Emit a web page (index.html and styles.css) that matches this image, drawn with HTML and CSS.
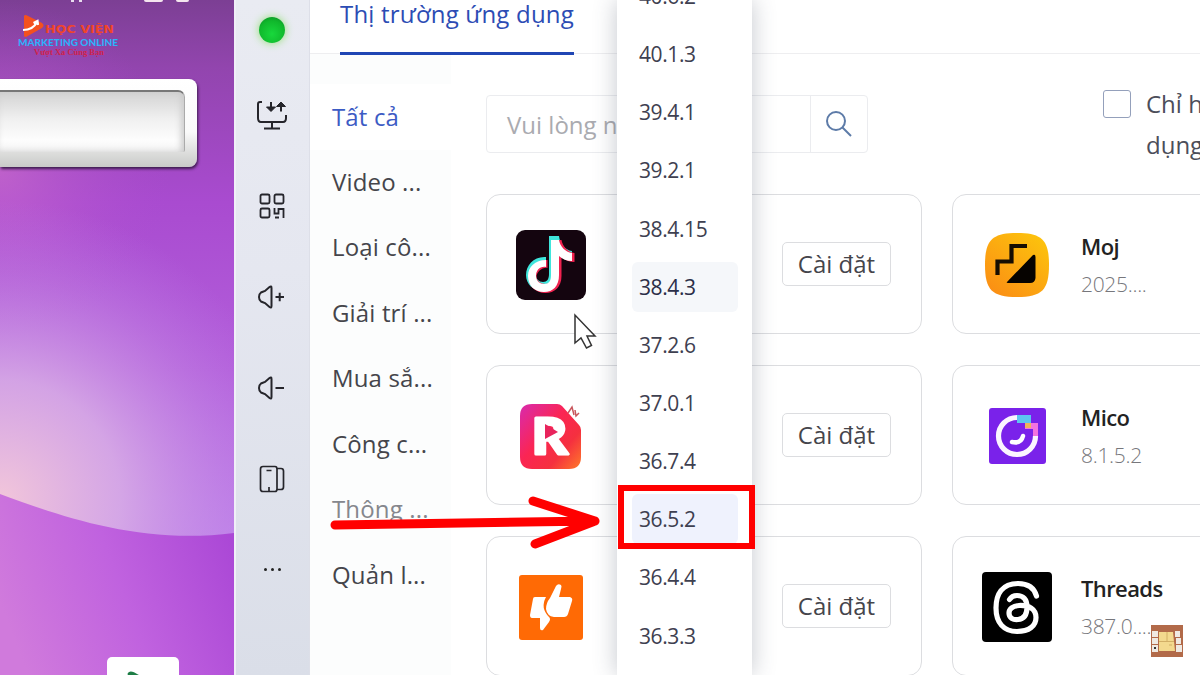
FILE: index.html
```html
<!DOCTYPE html>
<html lang="vi">
  <head>
    <meta charset="UTF-8">
    <title>Thị trường ứng dụng</title>
    <link rel="stylesheet" href="styles.css">
  </head>
  <body>
    <div class="phone">
      <svg class="wallpaper" viewBox="0 0 234 675" preserveAspectRatio="none">
        <defs>
          <linearGradient id="sky" x1="0" y1="0" x2="0" y2="1">
            <stop offset="0" stop-color="#7c3f94" />
            <stop offset="0.1" stop-color="#9245ae" />
            <stop offset="0.3" stop-color="#a94bd0" />
            <stop offset="0.55" stop-color="#b35fdb" />
            <stop offset="0.8" stop-color="#bd80ea" />
          </linearGradient>
          <radialGradient id="glow" gradientUnits="userSpaceOnUse" cx="0" cy="500" r="300">
            <stop offset="0" stop-color="#f2c6da" />
            <stop offset="0.4" stop-color="#d9aee6" stop-opacity="0.85" />
            <stop offset="0.75" stop-color="#c890e6" stop-opacity="0.35" />
            <stop offset="1" stop-color="#c080e8" stop-opacity="0" />
          </radialGradient>
          <linearGradient id="hill" x1="0" y1="0.6" x2="1" y2="0.3">
            <stop offset="0" stop-color="#d07adc" />
            <stop offset="0.5" stop-color="#c062df" />
            <stop offset="1" stop-color="#ab48d6" />
          </linearGradient>
          <radialGradient id="haze" gradientUnits="userSpaceOnUse" cx="0" cy="170" r="170">
            <stop offset="0" stop-color="#d070cc" stop-opacity="0.6" />
            <stop offset="1" stop-color="#b050d0" stop-opacity="0" />
          </radialGradient>
        </defs>
        <rect width="234" height="675" fill="url(#sky)" />
        <rect width="234" height="675" fill="url(#haze)" />
        <rect width="234" height="675" fill="url(#glow)" />
        <path d="M0 494C60 516 140 545 234 533V675H0Z" fill="url(#hill)" />
      </svg>
      <div class="status"><i></i><i></i><b></b><b></b></div>
      <svg class="brand" viewBox="0 0 106 44">
        <path d="M8 1Q8 0 10 0L26 8Q29 10.500 26 13L10 22Q8 22 8 21Z" fill="#f4511e" />
        <path d="M7 15Q17 15 21 7M17.500 8L21.500 6L22 10" fill="none" stroke="#fff" stroke-width="2.200" />
        <text x="29" y="17.500" class="brand-a" textLength="69" lengthAdjust="spacingAndGlyphs">HỌC VIỆN</text>
        <text x="2" y="31" class="brand-b" textLength="100" lengthAdjust="spacingAndGlyphs">MARKETING ONLINE</text>
        <text x="18" y="40" class="brand-c" textLength="70" lengthAdjust="spacingAndGlyphs">Vượt Xa Cùng Bạn</text>
      </svg>
      <div class="plate"><div class="plate-in"></div></div>
      <div class="app-tile">
        <svg viewBox="0 0 72 20"><path d="M19 18q2-3 7-1l9 5H19z" fill="#1e7d46" /></svg>
      </div>
    </div>

    <div class="toolbar">
      <span class="lamp"></span>
      <svg viewBox="0 0 32 32"><path d="M6 3H4Q2 3 2 5V19Q2 23 5 23H27Q30 23 30 19V16M16 23V29M8 29.500H24" /><path d="M15 3V11.500M25 12.500V4" /><path d="M10.500 8L15 12.500L19.500 8ZM20.500 7.500L25 3L29.500 7.500Z" fill="#25252b" stroke-width="1" /></svg>
      <svg viewBox="0 0 32 32"><g class="qr"><rect x="4.500" y="4.500" width="9" height="9" rx="1.500" /><rect x="18.500" y="4.500" width="9" height="9" rx="1.500" /><rect x="4.500" y="18.500" width="9" height="9" rx="1.500" /><path d="M18.500 18V23.500H22.500V19H27.500V28M19 27.500H23" /></g></svg>
      <svg viewBox="0 0 32 32"><path d="M15.500 7V25Q15.500 27.500 13.500 26L9 22L5 20.500Q3 19 3 16Q3 13 5 11.500L9 10L13.500 6Q15.500 4.500 15.500 7ZM19.500 16H28M23.700 11.700V20.300" /></svg>
      <svg viewBox="0 0 32 32"><path d="M15.500 7V25Q15.500 27.500 13.500 26L9 22L5 20.500Q3 19 3 16Q3 13 5 11.500L9 10L13.500 6Q15.500 4.500 15.500 7ZM19.500 16H28" /></svg>
      <svg viewBox="0 0 32 32"><path d="M7 3.500H19Q21 3.500 21 6V26Q21 28.500 19 28.500H7Q4.500 28.500 4.500 26V6Q4.500 3.500 7 3.500ZM21 5.500H25Q27.500 5.500 27.500 8V24Q27.500 26.500 25 26.500H21M10.500 7.500H15.500M13 24V28" class="thin" /></svg>
      <span class="more"><i></i><i></i><i></i></span>
    </div>

    <div class="market">
      <div class="tabs"><span class="tab">Thị trường ứng dụng</span></div>
      <div class="main">
        <div class="cats">
          <div class="cat on">Tất cả</div>
          <div class="cat">Video ...</div>
          <div class="cat">Loại cô...</div>
          <div class="cat">Giải trí ...</div>
          <div class="cat">Mua sắ...</div>
          <div class="cat">Công c...</div>
          <div class="cat dim">Thông ...</div>
          <div class="cat">Quản l...</div>
        </div>
        <div class="content">
          <div class="filter">
            <div class="search">
              <span>Vui lòng n</span>
              <svg viewBox="0 0 28 28"><circle cx="11" cy="11" r="9" /><path d="M17.500 17.500L26 26" /></svg>
            </div>
            <label class="only"><i></i><span>Chỉ h<br>dụng</span></label>
          </div>
          <div class="cards">
            <div class="card">
              <svg class="app" viewBox="0 0 70 70">
                <rect width="70" height="70" rx="9" fill="#14050f" />
                <path transform="translate(-1 -1)" fill="#3fe6dc" d="M34 7H44C45 15 50 21 57 22V31C52 31 47 29 44 26V45C44 56 37 62 28 62C18 62 11 55 11 46C11 36 19 27 31 28V37C25 36 21 41 21 46C21 50 24 53 28 53C32 53 34 50 34 45Z" />
                <path transform="translate(1.500 1)" fill="#f0224f" d="M34 9H44C45 15 50 21 57 22V31C52 31 47 29 44 26V45C44 56 37 62 28 62C18 62 11 55 11 46C11 36 19 29 30 29V37C25 36 19 41 19 46C19 50 24 53 28 53C32 53 34 50 34 45Z" />
                <path fill="#fff" d="M35 10H43C44 16 49 22 56 23V31C51 31 46 29 43 26V45C43 56 37 62 28 62C18 62 12 55 12 46C12 37 19 30 30 30V37C24 36 20 40 20 46C20 51 24 54 28 54C33 54 35 51 35 45Z" />
              </svg>
              <button>Cài đặt</button>
            </div>
            <div class="card">
              <svg class="app" viewBox="0 0 70 70">
                <defs>
                  <linearGradient id="reel" x1="0" y1="0.1" x2="1" y2="1">
                    <stop offset="0" stop-color="#dc2aa4" />
                    <stop offset="0.4" stop-color="#fb2553" />
                    <stop offset="0.7" stop-color="#f5303f" />
                    <stop offset="1" stop-color="#ff7a2a" />
                  </linearGradient>
                </defs>
                <path d="M16 3H41Q44 3 46 5L63 24Q65 26 65 29V56Q65 68 53 68H16Q4 68 4 56V15Q4 3 16 3Z" fill="url(#reel)" />
                <text x="15" y="53" class="reel-r" textLength="37" lengthAdjust="spacingAndGlyphs">R</text>
                <path d="M29 23L42 31L29 38Z" fill="#e8245c" />
                <path d="M52 12L56 6L58 14M59 9L60 15L63 12" fill="none" stroke="#c8565c" stroke-width="1.500" />
              </svg>
              <button>Cài đặt</button>
            </div>
            <div class="card">
              <svg class="app" viewBox="0 0 70 70">
                <rect x="3" y="3" width="64" height="65" rx="3" fill="#ff6a05" />
                <path d="M19 25H30Q24 36 33 45Q35 47 33 50L27 58Q24 59 24 56V46H16Q14 46 14 43L17 27Q17 25 19 25Z" fill="#fff" />
                <path d="M40 14Q42 11 45 13Q46 14 45 17L43 25H54Q57 26 56 29L52 42Q51 45 48 45H38Q31 44 30 37Q30 31 34 26Z" fill="#fff" />
              </svg>
              <button>Cài đặt</button>
            </div>
          </div>
          <div class="cards">
            <div class="card">
              <svg class="app" viewBox="0 0 70 70">
                <defs>
                  <linearGradient id="moj" x1="1" y1="0" x2="0.2" y2="1">
                    <stop offset="0" stop-color="#fdc80c" />
                    <stop offset="1" stop-color="#fb8f14" />
                  </linearGradient>
                </defs>
                <path d="M35 3C60 3 67 10 67 35S60 67 35 67S3 60 3 35S10 3 35 3Z" fill="url(#moj)" />
                <path d="M15.500 45V31.500H29.500V16H45" fill="none" stroke="#160d02" stroke-width="4.200" />
                <path d="M25 52L51 25Q53.500 24 53.500 27V48Q53 53 48 53H26Q24 53 25 52Z" fill="#060300" />
              </svg>
              <div class="info"><b>Moj</b><span>2025....</span></div>
            </div>
            <div class="card">
              <svg class="app" viewBox="0 0 70 70">
                <rect x="7" y="7" width="57" height="56" rx="3" fill="#7a22ea" />
                <path d="M35 16.500A18.500 18.500 0 1 0 53.500 35" fill="none" stroke="#fbf4ff" stroke-width="5.200" />
                <path d="M35 14H49V22H35Z" fill="#5cc4f0" />
                <path d="M49 22H56V35H51V28H43V22Z" fill="#f472e0" />
                <path d="M43 22H49V27H43Z" fill="#f0b25c" />
                <path d="M30 41Q39 43 41 35" fill="none" stroke="#fff" stroke-width="4.500" stroke-linecap="round" />
              </svg>
              <div class="info"><b>Mico</b><span>8.1.5.2</span></div>
            </div>
            <div class="card">
              <svg class="app" viewBox="0 0 70 70">
                <rect width="70" height="70" rx="4" fill="#000" />
                <path d="M54.500 24C52 15 45 11.500 36 11.500C20 11.500 14 22 14 36C14 51 22 59.500 35 59.500C47 59.500 54 54 54 45.500C54 37 47 33 37 33.500C31 34 27 37 27 41C27 46 31 48 36 47.500C43 47 45 42 45 35C45 27 41 23.500 35 23.500C31 23.500 29 25 27.500 27.500" fill="none" stroke="#fff" stroke-width="5.200" stroke-linecap="round" />
              </svg>
              <div class="info"><b>Threads</b><span>387.0....</span></div>
            </div>
          </div>
        </div>
      </div>
    </div>

    <div class="versions">
      <div>40.6.2</div>
      <div>40.1.3</div>
      <div>39.4.1</div>
      <div>39.2.1</div>
      <div>38.4.15</div>
      <div class="hover">38.4.3</div>
      <div>37.2.6</div>
      <div>37.0.1</div>
      <div>36.7.4</div>
      <div class="picked">36.5.2</div>
      <div>36.4.4</div>
      <div>36.3.3</div>
    </div>

    <svg class="cursor" viewBox="0 0 24 36"><path d="M2 2V30L8 25L13.500 35L18.500 32.500L14 23H22Z" /></svg>
    <svg class="arrow" viewBox="0 0 280 60"><path d="M5 30L265 26M203 6L265 26L205 49" /></svg>
    <div class="mark"></div>
    <svg class="stamp" viewBox="0 0 32 32">
      <rect width="32" height="32" fill="#b26a49" />
      <path d="M1 6h6v6H1zM1 13h6v6H1zM1 20h6v7H1zM24 6h5v6h-5zM25 13h5v6h-5zM25 20h6v7h-6z" fill="#efe9e2" />
      <path d="M8 7h14l2 19H8z" fill="#f3d98e" />
      <path d="M8 16.500H23M16 7V16M18 20H21" stroke="#c9a45c" stroke-width=".8" />
      <path d="M3 22h2v2H3z" fill="#333" />
    </svg>
  </body>
</html>
```
FILE: styles.css
```css
* { box-sizing: border-box }
body { background: #fff; color: #45454d; display: flex; font-family: "Open Sans", "Noto Sans", sans-serif; height: 675px; margin: 0; overflow: hidden; position: relative; width: 1200px }
svg { display: block; flex: none }

.phone { background: #a94bd0; display: flex; flex: none; flex-direction: column; height: 675px; overflow: hidden; position: relative; width: 234px }
.wallpaper { height: 675px; left: 0; position: absolute; top: 0; width: 234px }
.status { display: flex; gap: 5px; height: 15px; padding-left: 71px; position: relative }
.status i { background: #eadcf0; height: 2px; width: 3px }
.status b { background: #f4e6ee; border-radius: 0 0 3px 3px; height: 2px; margin-left: 8px; width: 13px }
.status b:nth-of-type(1) { margin-left: 57px; width: 19px }
.brand { height: 44px; margin-left: 16px; position: relative; width: 106px }
.brand-a { fill: #f0452a; font: bold 11px "DejaVu Sans", sans-serif }
.brand-b { fill: #2eb0fa; font: 900 10px Lato, sans-serif }
.brand-c { fill: #d0224a; font: bold 8px "Liberation Serif", serif }
.plate { background: linear-gradient(#fff, #fafafa 60%, #c9cac8); border-radius: 0 8px 8px 0; box-shadow: 1px 2px 3px #3c1b4c; height: 88px; margin-top: 20px; padding: 11px 12px 15px 0; position: relative; width: 197px }
.plate-in { background: linear-gradient(#d3d3d3, #f0f0f0 45%, #fdfdfd 80%, #f4f4f4); border-radius: 0 7px 2px 0; border-right: 1px solid #aaa; border-top: 2px solid #777; height: 62px; box-shadow: inset -3px 0 6px #ccc }
.app-tile { background: #fff; border-radius: 5px 5px 0 0; height: 18px; margin: auto 0 0 107px; position: relative; width: 72px }
.app-tile svg { height: 18px; width: 72px }

.toolbar { align-items: center; background: linear-gradient(#e9ebf2, #e5e7f0 40%, #dadee8); border-left: 2px solid #f0eff7; border-right: 1px solid #dddfe8; display: flex; flex: none; flex-direction: column; gap: 59px; padding: 17px 1px 0 0; width: 76px }
.toolbar svg { fill: none; height: 32px; stroke: #25252b; stroke-width: 2; width: 32px }
.toolbar .qr { stroke-width: 1.8 }
.toolbar .thin { stroke-width: 1.7 }
.lamp { background: radial-gradient(circle at 50% 65%, #18d83c, #10b82c 60%, #0a8a22); border-radius: 50%; box-shadow: 0 0 9px #90e070; flex: none; height: 26px; width: 26px }
.lamp + svg { margin-top: -3px }
.more { display: flex; gap: 4px; margin-top: 14px }
.more i { background: #222; border-radius: 50%; height: 3px; width: 3px }

.market { display: flex; flex: 1; flex-direction: column; height: 675px; min-width: 0; overflow: hidden }
.tabs { border-bottom: 1px solid #eeeef0; flex: none; height: 54px; padding-left: 30px }
.tab { border-bottom: 3px solid #2046b4; color: #2c4cb4; display: block; font-size: 24px; height: 55px; letter-spacing: 0.2px; line-height: 28px; position: relative; white-space: nowrap; width: 234px }
.main { display: flex; flex: 1; min-height: 0 }
.cats { background: #fcfdfd; flex: none; padding-top: 30px; width: 141px }
.cat { color: #45454b; font-size: 24px; height: 65.5px; letter-spacing: 0.15px; line-height: 64px; padding-left: 22px; white-space: nowrap }
.cat.on { background: #fff; color: #3c5bc4; line-height: 65px }
.cat.dim { color: #85878d }

.content { display: grid; flex: none; gap: 41px 30px; grid-template-columns: 436px 436px; padding: 41px 0 0 35px }
.filter { display: flex; grid-column: span 2; height: 58px }
.search { border: 1px solid #ebecef; border-radius: 4px; display: flex; flex: none; height: 58px; justify-content: space-between; width: 382px }
.search span { color: #aaabb0; font-size: 24px; line-height: 57px; padding-left: 20px }
.search svg { border-left: 1px solid #ebecef; fill: none; height: 56px; padding: 14px; stroke: #5d7ba8; stroke-width: 2; width: 57px }
.only { display: flex; flex: none; margin-left: 235px }
.only i { border: 1px solid #94a0bb; border-radius: 3px; flex: none; height: 28px; margin: -5px 15px 0 0; width: 28px }
.only span { color: #4c4e5a; font-size: 24px; line-height: 41px; margin-top: -12px; white-space: nowrap }
.cards { display: flex; flex-direction: column; gap: 31px }
.card { align-items: center; border: 1px solid #dcdde0; border-radius: 14px; display: flex; flex: none; height: 140px; padding: 2px 30px 0 29px }
.app { height: 70px; width: 70px }
.card button { background: #fff; border: 1px solid #dcdde0; border-radius: 5px; color: #45454b; font: 24px "Open Sans", sans-serif; height: 44px; line-height: 40px; margin: -3px 0 0 auto; padding: 0; width: 109px }
.info { display: flex; flex-direction: column; gap: 2px; margin-left: 29px }
.info b { color: #222; font-size: 22px; font-weight: 600; letter-spacing: -0.6px; line-height: 36px }
.info span { color: #77777c; font-size: 21px; font-weight: 300; letter-spacing: -0.3px; line-height: 36px }
.reel-r { fill: #fff; font: bold 50px "Open Sans", sans-serif; stroke: #fff; stroke-linejoin: round; stroke-width: 3 }

.versions { background: #fff; box-shadow: 0 0 22px rgba(60, 70, 90, 0.3); display: flex; flex-direction: column; height: 675px; left: 617px; overflow: hidden; padding: 0 15px; position: absolute; top: 0; width: 135px }
.versions div { border-radius: 6px; color: #3e4050; flex: none; font-size: 21px; height: 50px; letter-spacing: -0.4px; line-height: 51px; margin-bottom: 8.15px; padding-left: 7px; width: 106px }
.versions div:first-child { margin-top: -29px }
.versions .hover { background: #f5f7fa; color: #2b2e48 }
.versions .picked { background: #eff2fd }

.cursor { fill: #fff; height: 36px; left: 573px; position: absolute; stroke: #333; stroke-width: 1.5; top: 313px; width: 24px }
.arrow { fill: none; height: 60px; left: 330px; position: absolute; stroke: #f00; stroke-linecap: round; stroke-linejoin: round; stroke-width: 9; top: 495px; width: 280px }
.mark { border: 6px solid #f00; height: 64px; left: 618px; position: absolute; top: 485px; width: 137px }
.stamp { height: 32px; left: 1151px; position: absolute; top: 625px; width: 32px }
```
